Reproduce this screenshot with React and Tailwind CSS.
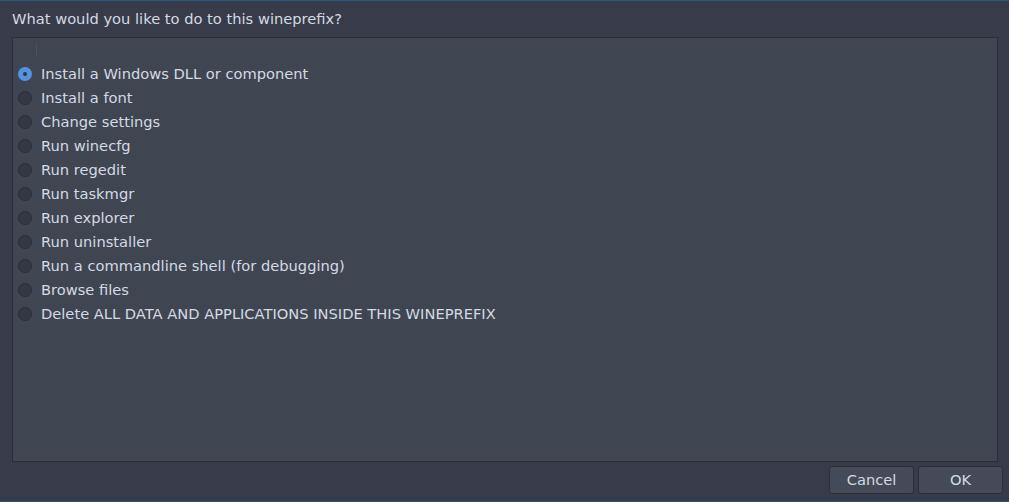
const OPTIONS = [
  'Install a Windows DLL or component',
  'Install a font',
  'Change settings',
  'Run winecfg',
  'Run regedit',
  'Run taskmgr',
  'Run explorer',
  'Run uninstaller',
  'Run a commandline shell (for debugging)',
  'Browse files',
  'Delete ALL DATA AND APPLICATIONS INSIDE THIS WINEPREFIX',
]

function Radio({ checked }) {
  return checked ? (
    <span className="w-[14px] h-[14px] rounded-full bg-[#5294e2] flex items-center justify-center shrink-0">
      <span className="w-[4px] h-[4px] rounded-full bg-[#2f343f]" />
    </span>
  ) : (
    <span className="w-[14px] h-[14px] rounded-full bg-[#343844] border border-[#2b2e38] shrink-0" />
  )
}

export default function App() {
  return (
    <div className="w-[1009px] h-[502px] bg-[#383c4a] border-t border-b border-[#2a5a80] flex flex-col text-[#d3dae3] text-[14.67px] overflow-hidden"
      style={{ fontFamily: '"DejaVu Sans", sans-serif' }}>
      <div className="h-[36px] px-3 flex items-center">What would you like to do to this wineprefix?</div>
      <div className="flex-1 ml-3 mr-[11px] bg-[#404552] border border-[#2b2e39] flex flex-col">
        <div className="h-[24px] flex items-start pl-[23px] pt-[5px]">
          <span className="w-px h-[14px] bg-[#4d5260]" />
        </div>
        {OPTIONS.map((label, i) => (
          <div key={label} className="h-[24px] flex items-center pl-[5px] gap-[9px]">
            <Radio checked={i === 0} />
            <span>{label}</span>
          </div>
        ))}
      </div>
      <div className="h-[39px] flex items-start justify-end gap-[4px] pr-[6px] pt-[4px]">
        <button className="w-[85px] h-[28px] rounded-[3px] bg-[#444a58] border border-[#2b2e39] text-[#d3dae3]">Cancel</button>
        <button className="w-[85px] h-[28px] rounded-[3px] bg-[#444a58] border border-[#2b2e39] text-[#d3dae3]">OK</button>
      </div>
    </div>
  )
}
